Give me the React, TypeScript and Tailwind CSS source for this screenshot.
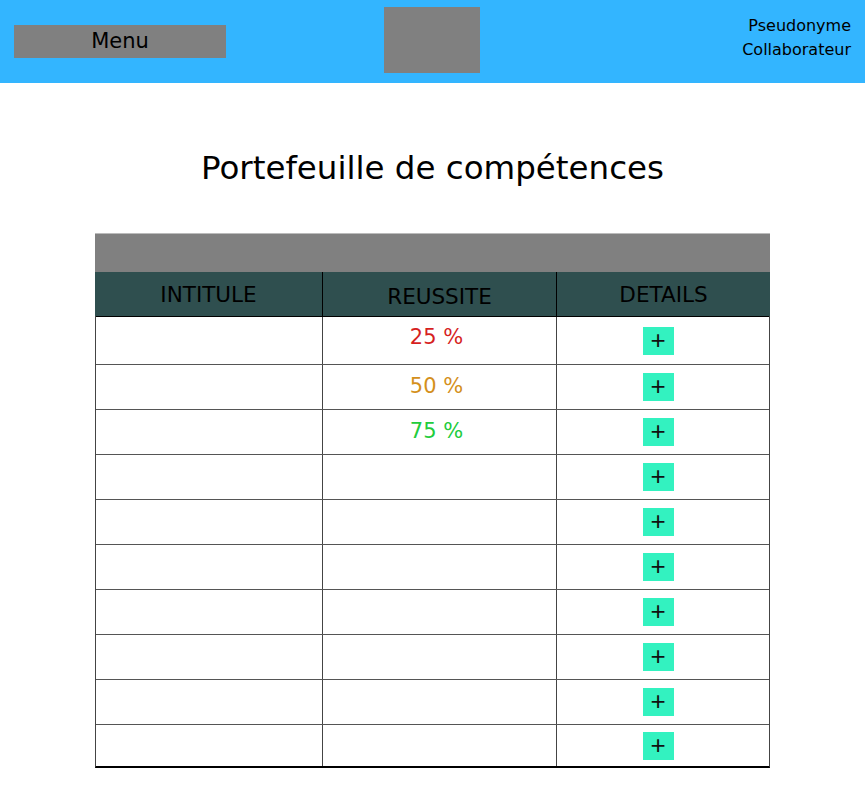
import React from 'react';

const rows = [
  { value: '25 %', color: 'text-[#d61f1f]', h: 'h-[48px]' },
  { value: '50 %', color: 'text-[#d4901c]', h: 'h-[45px]' },
  { value: '75 %', color: 'text-[#22cc3c]', h: 'h-[45px]' },
  { value: '', color: '', h: 'h-[45px]' },
  { value: '', color: '', h: 'h-[45px]' },
  { value: '', color: '', h: 'h-[45px]' },
  { value: '', color: '', h: 'h-[45px]' },
  { value: '', color: '', h: 'h-[45px]' },
  { value: '', color: '', h: 'h-[45px]' },
  { value: '', color: '', h: 'h-[42px]' },
];

export default function App() {
  return (
    <div className="min-h-[797px] bg-white font-['DejaVu_Sans',sans-serif] text-black">
      <header className="grid h-[83px] grid-cols-[1fr_96px_1fr] items-center bg-[#33b5ff] px-[14px]">
        <div>
          <button className="-mt-[1px] flex h-[33px] w-[212px] items-center justify-center bg-[#808080] pt-[1px] text-[21px]">
            Menu
          </button>
        </div>
        <div className="-ml-[1px] -mt-[3px] h-[66px] w-[96px] bg-[#808080]" />
        <div className="-mt-[7px] text-right text-[16px] leading-[24px]">
          <div>Pseudonyme</div>
          <div>Collaborateur</div>
        </div>
      </header>

      <main className="flex flex-col items-center">
        <h1 className="mt-[66px] text-[32.5px] leading-[38px]">Portefeuille de compétences</h1>

        <div className="mt-[46px] w-[675px]">
          <div className="h-[39px] border-t border-[#bbb] bg-[#808080]" />
          <div className="grid h-[44px] grid-cols-[228px_234px_213px] bg-[#2f4f4f] text-[21.5px]">
            <div className="flex items-center justify-center border-r border-black pt-[3px]">INTITULE</div>
            <div className="flex items-center justify-center border-r border-black pt-[6px]">REUSSITE</div>
            <div className="flex items-center justify-center pt-[3px]">DETAILS</div>
          </div>
          <div className="border border-t-0 border-[#444] border-b-black border-b-2">
            {rows.map((r, i) => (
              <div
                key={i}
                className={`grid grid-cols-[227px_234px_212px] ${r.h} ${i === 0 ? 'border-t border-black' : 'border-t border-[#555]'}`}
              >
                <div className="border-r border-[#444]" />
                <div className={`flex items-center justify-center border-r border-[#444] pr-[6px] text-[21px] ${r.color} ${i === 0 ? 'pb-[6px]' : ''}`}>
                  {r.value}
                </div>
                <div className="flex items-center justify-center pr-[10px]">
                  <button className="flex h-[28px] w-[31px] items-center justify-center bg-[#33f2c0] pb-[2px] font-['Liberation_Sans',sans-serif] text-[26px] font-light leading-none text-[#111]">
                    +
                  </button>
                </div>
              </div>
            ))}
          </div>
        </div>
      </main>
    </div>
  );
}
